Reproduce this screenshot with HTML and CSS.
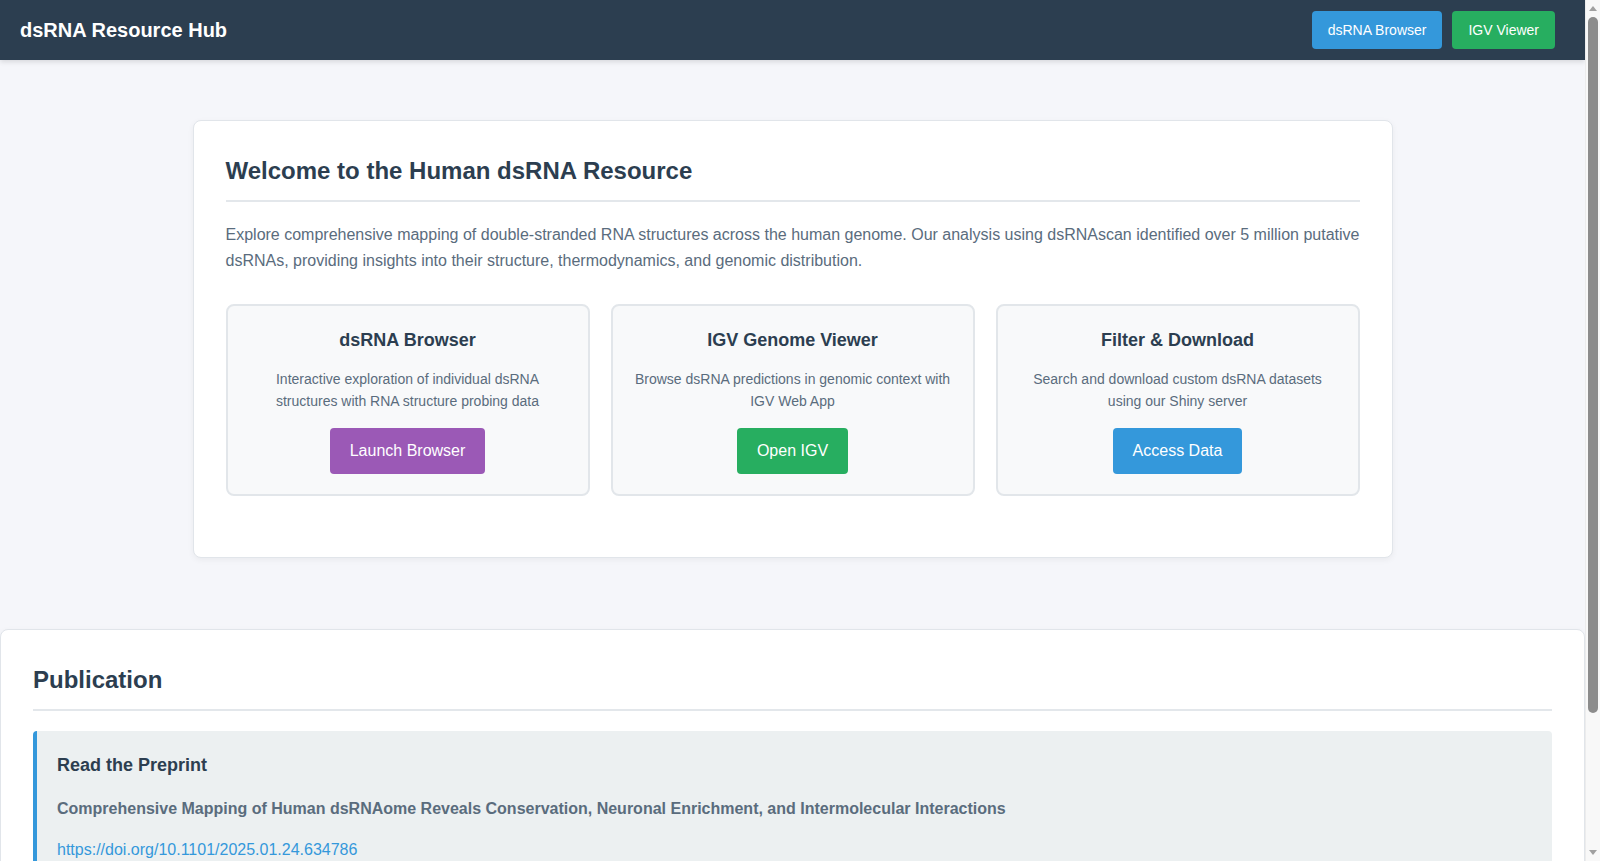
FILE: index.html
```html
<!DOCTYPE html>
<html lang="en">
<head>
  <meta charset="UTF-8" />
  <meta name="viewport" content="width=device-width, initial-scale=1.0"/>
  <title>dsRNA Resource Hub</title>
  <link rel="stylesheet" href="styles.css">
</head>
<body>

<!-- Header -->
<header class="topbar">
  <div class="brand">dsRNA Resource Hub</div>
  <nav class="nav">
    <a href="#" class="nav-btn blue">dsRNA Browser</a>
    <a href="#" class="nav-btn green">IGV Viewer</a>
  </nav>
</header>

<!-- Welcome -->
<div class="container">
  <div class="card">
    <h2>Welcome to the Human dsRNA Resource</h2>
    <p class="intro">Explore comprehensive mapping of double-stranded RNA structures across the human genome. Our analysis using dsRNAscan identified over 5 million putative dsRNAs, providing insights into their structure, thermodynamics, and genomic distribution.</p>

    <div class="features">
      <div class="feature">
        <h3>dsRNA Browser</h3>
        <p>Interactive exploration of individual dsRNA structures with RNA structure probing data</p>
        <a href="#" class="btn purple">Launch Browser</a>
      </div>
      <div class="feature">
        <h3>IGV Genome Viewer</h3>
        <p>Browse dsRNA predictions in genomic context with IGV Web App</p>
        <a href="#" class="btn green">Open IGV</a>
      </div>
      <div class="feature">
        <h3>Filter &amp; Download</h3>
        <p>Search and download custom dsRNA datasets using our Shiny server</p>
        <a href="#" class="btn blue">Access Data</a>
      </div>
    </div>
  </div>
</div>

<!-- Publication -->
<section class="card publication">
  <h2>Publication</h2>
  <div class="preprint">
    <h3>Read the Preprint</h3>
    <p class="paper-title">Comprehensive Mapping of Human dsRNAome Reveals Conservation, Neuronal Enrichment, and Intermolecular Interactions</p>
    <p><a href="#" class="doi">https://doi.org/10.1101/2025.01.24.634786</a></p>
  </div>
</section>

<!-- Scrollbar -->
<div class="scrollbar">
  <div class="arrow up"></div>
  <div class="thumb"></div>
  <div class="arrow down"></div>
</div>

</body>
</html>
```

FILE: styles.css
```css
body {
  margin: 0 15px 0 0;
  padding: 0 0 110px;
  font-family: "Liberation Sans", Arial, sans-serif;
  background: #f5f6fa;
  color: #2c3e50;
  line-height: 1.6;
}

a {
  text-decoration: none;
}

/* Header */
.topbar {
  height: 60px;
  display: flex;
  align-items: center;
  justify-content: space-between;
  padding: 0 30px 0 20px;
  background: #2c3e50;
  box-shadow: 0 2px 5px rgba(0, 0, 0, 0.12);
}

.brand {
  color: #fff;
  font-size: 20px;
  font-weight: bold;
}

.nav {
  display: flex;
  gap: 10px;
}

.nav-btn {
  display: block;
  padding: 8px 16px;
  font-size: 14px;
  line-height: 22px;
  color: #fff;
  border-radius: 4px;
}

.blue { background: #3498db; }
.green { background: #27ae60; }
.purple { background: #9b59b6; }

/* Cards */
.container {
  max-width: 1200px;
  margin: 60px auto 71px;
}

.card {
  background: #fff;
  border: 1px solid #e1e5ea;
  border-radius: 8px;
  padding: 32px;
  box-shadow: 0 2px 6px rgba(0, 0, 0, 0.05);
}

.card h2 {
  margin: 0 0 20px;
  padding-bottom: 11px;
  font-size: 24px;
  line-height: 1.5;
  border-bottom: 2px solid #e3e7eb;
}

.intro {
  margin: 0 0 31px;
  font-size: 16px;
  color: #5a6c7d;
}

.features {
  display: grid;
  grid-template-columns: repeat(3, 1fr);
  gap: 21px;
  margin-bottom: 29px;
}

.feature {
  display: flex;
  flex-direction: column;
  align-items: center;
  text-align: center;
  padding: 20px;
  background: #f8f9fa;
  border: 2px solid #e2e6ea;
  border-radius: 8px;
}

.feature h3 {
  margin: 0 0 13px;
  font-size: 18px;
}

.feature p {
  margin: 0 0 15px;
  font-size: 14px;
  color: #5a6c7d;
}

.btn {
  display: block;
  padding: 13px 20px;
  font-size: 16px;
  line-height: 20px;
  color: #fff;
  border-radius: 4px;
}

/* Publication */
.preprint {
  background: #ecf0f1;
  border-left: 4px solid #3498db;
  border-radius: 4px;
  padding: 20px;
}

.preprint h3 {
  margin: 0 0 16px;
  font-size: 18px;
}

.preprint p {
  margin: 0 0 16px;
  font-size: 16px;
}

.preprint p:last-child {
  margin-bottom: 0;
}

.paper-title {
  font-weight: bold;
  color: #5a6c7d;
}

.doi {
  color: #3498db;
}

/* Browser scrollbar */
.scrollbar {
  position: fixed;
  top: 0;
  right: 0;
  width: 15px;
  height: 100vh;
  background: #f8f8f8;
  border-left: 1px solid #ececec;
  box-sizing: border-box;
}

.thumb {
  position: absolute;
  top: 17px;
  left: 2px;
  width: 10px;
  height: 696px;
  background: #8c8c8c;
  border-radius: 5px;
}

.arrow {
  position: absolute;
  left: 3px;
  width: 0;
  height: 0;
  border-left: 4px solid transparent;
  border-right: 4px solid transparent;
}

.arrow.up {
  top: 6px;
  border-bottom: 5px solid #a0a0a0;
}

.arrow.down {
  bottom: 6px;
  border-top: 5px solid #a0a0a0;
}
```
